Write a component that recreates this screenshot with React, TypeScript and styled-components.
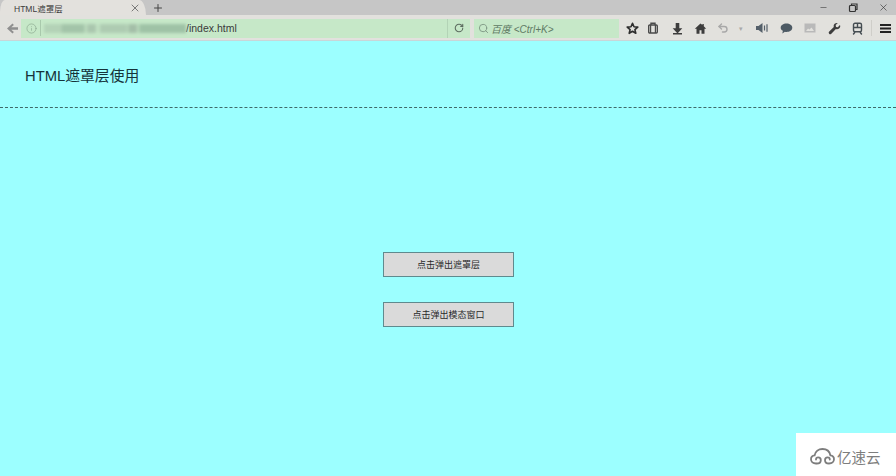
import React from "react";
import styled, { createGlobalStyle } from "styled-components";
import { Info, RotateCw, Search, X, Plus, Minus, Undo2 } from "lucide-react";

const Global = createGlobalStyle`
  html, body { margin: 0; padding: 0; width: 896px; height: 476px; overflow: hidden; background: #9cffff; }
  body { font-family: "Liberation Sans", "Noto Sans CJK SC", sans-serif; }
`;
const Page = styled.div`
  position: relative; width: 896px; height: 476px; display: flex; flex-direction: column; background: #9cffff;
`;
const TabStrip = styled.div`
  height: 15px; background: #c6c6c6; display: flex; align-items: center; flex: none;
`;
const Tab = styled.div`
  width: 146px; height: 15px; box-sizing: border-box; padding: 0 5px 0 14px; background: #e3e1dd;
  border-top-right-radius: 7px 15px; border-top-left-radius: 5px 12px;
  display: flex; align-items: center; justify-content: space-between; font-size: 8.5px; color: #3c3c3c;
`;
const NewTab = styled.div`
  margin-left: 6px; display: flex; color: #444;
`;
const WindowControls = styled.div`
  margin-left: auto; display: flex; align-items: center; gap: 20px; padding-right: 7px; color: #333;
`;
const Glyph = styled.svg<{ $s: number }>`width: ${p => p.$s}px; height: ${p => p.$s}px; display: block;`;
const Toolbar = styled.div`
  height: 26px; flex: none; box-sizing: border-box; padding: 4px 0 3px 6px; display: flex; align-items: center;
  background: #e2e1dd; border-bottom: 1px solid #c9d6d8;
`;
const BackBtn = styled.div`width: 14px; display: flex; color: #8f8f8f; flex: none;`;
const UrlBar = styled.div`
  width: 449px; height: 19px; margin-left: 1px; flex: none; background: #c6e8c8; display: flex; align-items: center; box-sizing: border-box; padding-left: 5px;
  font-size: 10.5px;
`;
const UrlInfo = styled.div`display: flex; color: #84a088; width: 14px; flex: none;`;
const UrlSep = styled.div`width: 1px; height: 16px; background: #a9c9ac; flex: none;`;
const Blurred = styled.div`
  position: relative; width: 143px; height: 13px; margin-left: 2px; flex: none;
`;
const BlurSmear = styled.div`
  position: absolute; left: 1px; right: 0; top: 2px; height: 9px; filter: blur(1.5px);
  background: linear-gradient(90deg,
    #b4d2b7 0 12%, #a3c4a9 13% 28%, #bcdcbe 29% 30%, #aac6ae 31% 36%, #c0e0c2 37% 39%,
    #aecbb2 40% 58%, #bcdcbe 59%, #a4bea8 60% 65%, #c0e0c2 66%, #9fc2a6 68% 100%);
`;
const UrlText = styled.span`color: #3a3a3a; flex: none;`;
const ReloadBox = styled.div`
  margin-left: auto; width: 23px; height: 19px; display: flex; align-items: center; justify-content: center; color: #5d6d60; border-left: 1px solid #b3d3b6; box-sizing: border-box; flex: none;
`;
const SearchBar = styled.div`
  width: 145px; height: 19px; margin-left: 4px; flex: none; background: #c6e8c8; display: flex; align-items: center; gap: 2px; padding-left: 4px; box-sizing: border-box;
  font-size: 10px; font-style: italic; color: #5f7a64;
`;
const SearchIcon = styled.div`display: flex; color: #7e9783;`;
const IconGroup = styled.div`
  margin-left: 3px; display: flex; align-items: center; flex: 1;
`;
const ToolIcon = styled.div<{ $w: number; $c?: string }>`
  width: ${p => p.$w}px; flex: none; display: flex; justify-content: center; color: ${p => p.$c || "#3d3d3d"};
`;
const Divider = styled.div`width: 1px; height: 16px; margin-left: 3px; background: #cfcec9; flex: none;`;
const Caret = styled.div`width: 10px; margin-right: 4px; flex: none; text-align: center; color: #a9a9a9; font-size: 7px; line-height: 1;`;
const Header = styled.header`
  height: 67px; flex: none; box-sizing: border-box; padding: 26px 0 0 25px; border-bottom: 1px dashed #3f6a6a;
`;
const Title = styled.h1`
  margin: 0; font-size: 14.8px; line-height: 18px; font-weight: 400; color: #16333a; font-family: "Liberation Sans", "Noto Sans CJK SC", sans-serif;
`;
const Main = styled.main`
  flex: 1; display: flex; flex-direction: column; align-items: center; padding: 144px 0 0 1px; gap: 25px;
`;
const ActionButton = styled.button`
  width: 131px; height: 25px; padding: 0; background: #dadada; border: 1px solid #5f8a8e; color: #2a2a2a; font-size: 9px; font-family: "Noto Sans CJK SC", sans-serif;
`;
const Watermark = styled.div`
  position: absolute; right: 0; bottom: 0; width: 100px; height: 43px; background: #fff; display: flex; align-items: center; padding: 3px 0 0 13px; box-sizing: border-box; gap: 1px;
  color: #7d7d7d; font-size: 14.5px; font-family: "Noto Sans CJK SC", sans-serif;
`;
const CloudLogo = styled.svg`width: 27px; height: 19px; flex: none;`;

export default function App() {
  return (
    <Page>
      <Global />
      <TabStrip>
        <Tab>
          <span>HTML遮罩层</span>
          <X size={12} strokeWidth={1.5} color="#555" />
        </Tab>
        <NewTab><Plus size={12} strokeWidth={2} /></NewTab>
        <WindowControls>
          <Minus size={9} strokeWidth={1.5} />
          <Glyph $s={10} viewBox="0 0 10 10" fill="none" stroke="currentColor" strokeWidth="1.2">
            <rect x="1.5" y="2.5" width="6" height="6" rx="1" />
            <path d="M3.5 2V1h5.5v5.5H8" />
          </Glyph>
          <X size={11} strokeWidth={1.4} />
        </WindowControls>
      </TabStrip>
      <Toolbar>
        <BackBtn>
          <Glyph $s={13} viewBox="0 0 13 13" fill="currentColor">
            <path d="M6.5 1.5 1 6.5l5.5 5 1.4-1.4-2.6-2.4H12V5.3H5.3l2.6-2.4z" />
          </Glyph>
        </BackBtn>
        <UrlBar>
          <UrlInfo><Info size={11} strokeWidth={1.3} /></UrlInfo>
          <UrlSep />
          <Blurred><BlurSmear /></Blurred>
          <UrlText>/index.html</UrlText>
          <ReloadBox><RotateCw size={10} strokeWidth={2.6} /></ReloadBox>
        </UrlBar>
        <SearchBar>
          <SearchIcon><Search size={11} strokeWidth={2} /></SearchIcon>
          <span>百度 &lt;Ctrl+K&gt;</span>
        </SearchBar>
        <IconGroup>
          <ToolIcon $w={20} $c="#2e2e2e">
            <Glyph $s={13} viewBox="0 0 13 13" fill="none" stroke="currentColor" strokeWidth="1.6" strokeLinejoin="round">
              <path d="M6.5 1.3 8 4.8l3.8.3-2.9 2.5.9 3.7-3.3-2-3.3 2 .9-3.7L1.2 5.1 5 4.8z" />
            </Glyph>
          </ToolIcon>
          <ToolIcon $w={22} $c="#4a4a4a">
            <Glyph $s={12} viewBox="0 0 12 12" fill="none" stroke="currentColor" strokeWidth="1.4">
              <rect x="1.7" y="3" width="8.6" height="8" rx="1" />
              <path d="M4 3V1.2h4V3" />
              <path d="M3.6 3v8M8.4 3v8" strokeWidth="1.2" />
            </Glyph>
          </ToolIcon>
          <ToolIcon $w={26}>
            <Glyph $s={13} viewBox="0 0 13 13" fill="currentColor">
              <path d="M4.7 1h3.6v5.2h3L6.5 11.4 1.7 6.2h3zM2 11h9v1.4H2z" />
            </Glyph>
          </ToolIcon>
          <ToolIcon $w={20}>
            <Glyph $s={13} viewBox="0 0 13 13" fill="currentColor">
              <path d="M6.5 1.5 .8 6.8h1.7v5h3V8.3h2v3.5h3v-5h1.7L9.8 4.3V2H8.4v1z" />
            </Glyph>
          </ToolIcon>
          <ToolIcon $w={26} $c="#a8a8a8"><Undo2 size={12} strokeWidth={2.8} /></ToolIcon>
          <Caret>▾</Caret>
          <ToolIcon $w={24} $c="#55606a">
            <Glyph $s={14} viewBox="0 0 14 14" fill="currentColor">
              <path d="M1 5h2.5L7.5 2v10l-4-3H1z" />
              <path d="M9.5 4.5v5M12 3.2v7.6" fill="none" stroke="currentColor" strokeWidth="1.2" />
            </Glyph>
          </ToolIcon>
          <ToolIcon $w={24} $c="#4d5a64">
            <Glyph $s={13} viewBox="0 0 13 13" fill="currentColor">
              <path d="M6.5 1.5c3.2 0 5.8 1.8 5.800 4.200S9.700 9.900 6.500 9.900c-.6 0-1.100 0-1.600-.2L2.300 11.500l.6-2.700C1.400 8 .7 7 .7 5.700.7 3.300 3.300 1.500 6.500 1.500z" />
            </Glyph>
          </ToolIcon>
          <ToolIcon $w={24} $c="#b9b9b9">
            <Glyph $s={12} viewBox="0 0 12 12" fill="currentColor">
              <path d="M.5 1.500h11v9H.5zm1.500 7.500h8L7.500 5.500 5.500 7.500 4 6.500z" fillRule="evenodd" />
            </Glyph>
          </ToolIcon>
          <ToolIcon $w={24}>
            <Glyph $s={13} viewBox="0 0 13 13" fill="currentColor">
              <path d="M11.900 3.100 9.800 5.200 8 4.900 7.700 3.100 9.800 1C8.100.6 6.300 1.400 5.800 3.100c-.2.600-.2 1.300 0 1.900L1 9.800a1.500 1.500 0 0 0 2.100 2.100l4.800-4.800c1.900.6 3.900-.4 4.300-2.300.1-.6 0-1.200-.3-1.700z" />
            </Glyph>
          </ToolIcon>
          <ToolIcon $w={22} $c="#454d52">
            <Glyph $s={13} viewBox="0 0 13 13" fill="none" stroke="currentColor" strokeWidth="1.4">
              <rect x="2.500" y="1.200" width="8" height="8.600" rx="1.500" />
              <path d="M2.500 5.500h8M6.500 1.500v4M4 10l-1.800 2.500M9 10l1.800 2.500" />
            </Glyph>
          </ToolIcon>
          <Divider />
          <ToolIcon $w={26} $c="#222">
            <Glyph $s={13} viewBox="0 0 13 13" fill="currentColor">
              <path d="M1 2h11v2H1zM1 5.500h11v2H1zM1 9h11v2H1z" />
            </Glyph>
          </ToolIcon>
        </IconGroup>
      </Toolbar>
      <Header><Title>HTML遮罩层使用</Title></Header>
      <Main>
        <ActionButton>点击弹出遮罩层</ActionButton>
        <ActionButton>点击弹出模态窗口</ActionButton>
      </Main>
      <Watermark>
        <CloudLogo viewBox="0 0 27 19" fill="none" stroke="#7d7d7d" strokeWidth="1.8" strokeLinecap="round">
          <path d="M7 16.500c-3 0-5-1.800-5-4.200 0-2.200 1.600-3.700 3.600-3.900C6.200 4.500 9.500 2 13.500 2s7.200 2.500 7.900 6.400c2 .2 3.600 1.700 3.600 3.900 0 2.400-2 4.200-5 4.200-2.600 0-4-1.500-4-3.300s1.300-2.800 2.600-2.800 2.200 1 2.200 2.100" />
          <path d="M7.800 16.500c2.600 0 4-1.500 4-3.300s-1.300-2.800-2.600-2.800-2.200 1-2.200 2.100" />
        </CloudLogo>
        <span>亿速云</span>
      </Watermark>
    </Page>
  );
}
